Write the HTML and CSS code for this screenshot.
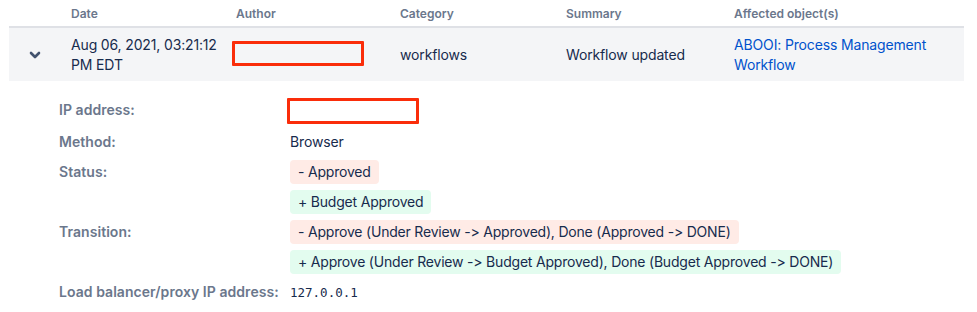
FILE: index.html
```html
<!DOCTYPE html>
<html lang="en">
<head>
  <meta charset="UTF-8">
  <title>Audit log</title>
  <link rel="stylesheet" href="styles.css">
</head>
<body>
  <div class="log">
    <div class="head">
      <div></div>
      <div>Date</div>
      <div>Author</div>
      <div>Category</div>
      <div>Summary</div>
      <div>Affected object(s)</div>
    </div>
    <div class="row">
      <div class="toggle">
        <svg width="12" height="8" viewBox="0 0 12 8"><path d="M2 2 L6 6 L10 2" fill="none" stroke="#42526e" stroke-width="2.6" stroke-linecap="round" stroke-linejoin="round"/></svg>
      </div>
      <div class="cell date">Aug 06, 2021, 03:21:12 PM EDT</div>
      <div class="cell"><span class="redact author"></span></div>
      <div class="cell">workflows</div>
      <div class="cell">Workflow updated</div>
      <div class="cell"><a href="#">ABOOI: Process Management Workflow</a></div>
    </div>
  </div>

  <div class="details">
    <div class="label">IP address:</div>
    <div class="value"><span class="redact ip"></span></div>

    <div class="label">Method:</div>
    <div class="value">Browser</div>

    <div class="label">Status:</div>
    <div class="value stack">
      <span class="chip removed">- Approved</span>
      <span class="chip added">+ Budget Approved</span>
    </div>

    <div class="label">Transition:</div>
    <div class="value stack">
      <span class="chip removed">- Approve (Under Review -&gt; Approved), Done (Approved -&gt; DONE)</span>
      <span class="chip added">+ Approve (Under Review -&gt; Budget Approved), Done (Budget Approved -&gt; DONE)</span>
    </div>

    <div class="label">Load balancer/proxy IP address:</div>
    <div class="value mono">127.0.0.1</div>
  </div>
</body>
</html>
```

FILE: styles.css
```css
body { margin: 0; background: #fff; font-family: Inter, "Noto Sans", sans-serif; font-size: 14px; letter-spacing: -0.15px; color: #172b4d; font-feature-settings: "calt" 0, "liga" 0; }

.log { margin: 0 13px 0 9px; }
.head, .row { display: grid; grid-template-columns: 62px 165px 164px 166px 168px 1fr; }
.head { height: 26px; border-bottom: 2px solid #dfe1e6; font-size: 12px; font-weight: 600; color: #6b778c; align-items: center; letter-spacing: 0; }
.row { background: #f4f5f7; padding: 7px 0 6px; line-height: 20px; align-items: center; }
.toggle { display: flex; justify-content: center; padding-right: 10px; }
.cell { padding-right: 10px; }
.row a { color: #0052cc; text-decoration: none; }

.redact { display: inline-block; border: 3px solid #fa2d0a; border-radius: 1px; box-sizing: border-box; filter: blur(0.4px); vertical-align: middle; }
.redact.author { width: 132px; height: 25px; margin-left: -4px; margin-top: -3px; }
.redact.ip { width: 132px; height: 26px; margin-left: -3px; margin-top: -1px; }

.details { display: grid; grid-template-columns: 231px 1fr; row-gap: 6px; padding: 17px 0 0 59px; line-height: 24px; }
.label { font-weight: 600; color: #6b778c; letter-spacing: 0.05px; }
.stack { display: flex; flex-direction: column; align-items: flex-start; gap: 6px; }
.chip { border-radius: 4px; padding: 0 8px; letter-spacing: -0.2px; }
.chip.removed { background: #ffebe6; }
.chip.added { background: #e3fcef; }
.mono { font-family: "DejaVu Sans Mono", monospace; font-size: 12.5px; letter-spacing: 0; padding-top: 1px; }
```
